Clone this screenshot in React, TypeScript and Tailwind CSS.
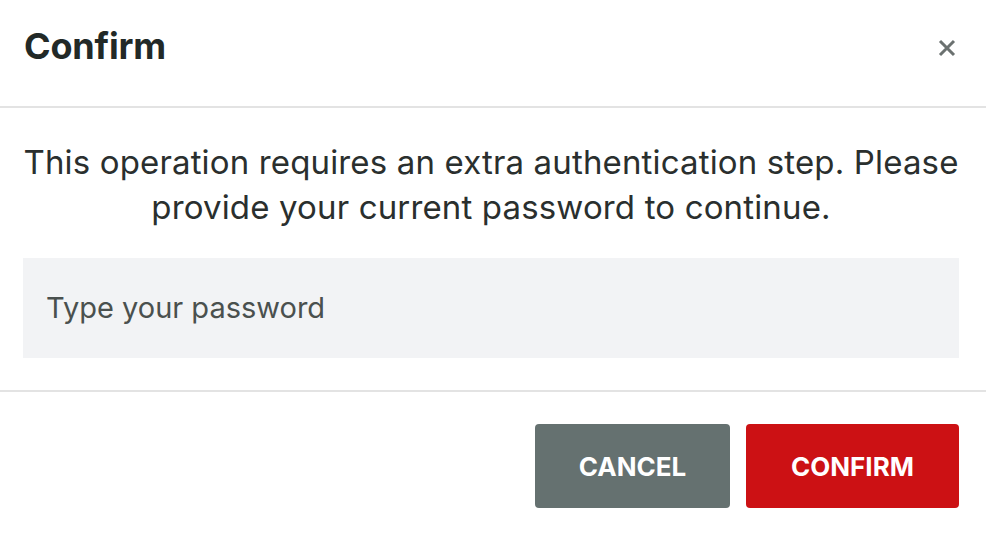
import React from "react";

export default function App() {
  return (
    <div className="w-[986px] h-[536px] bg-white overflow-hidden" style={{ fontFamily: "Inter, 'Noto Sans', sans-serif" }}>
      <div className="h-[108px] flex items-center justify-between pl-6 pr-[30px] pb-[14px] border-b-2 border-[#e3e3e3]">
        <h1 className="text-[36px] font-bold text-[#222927] tracking-[-0.2px]">Confirm</h1>
        <svg width="18" height="18" viewBox="0 0 18 18" className="mt-[3px]">
          <path d="M2 2 L16 16 M16 2 L2 16" stroke="#6b7170" strokeWidth="3" strokeLinecap="butt" />
        </svg>
      </div>
      <div className="pt-8 pb-8 pl-[23px] pr-[27px] border-b-2 border-[#e3e3e3]">
        <p className="text-center text-[33px] leading-[45px] text-[#2a2f2e] tracking-[0.15px]">
          This operation requires an extra authentication step. Please provide your current password to continue.
        </p>
        <div className="mt-[28px] h-[100px] bg-[#f2f3f5] flex items-center pl-[23px]">
          <span className="text-[29px] text-[#4a504e]">Type your password</span>
        </div>
      </div>
      <div className="flex justify-end gap-4 pt-[32px] pr-[27px]">
        <button className="w-[195px] h-[84px] rounded-[4px] bg-[#657170] text-white text-[26px] font-bold">CANCEL</button>
        <button className="w-[213px] h-[84px] rounded-[4px] bg-[#cc1114] text-white text-[26px] font-bold">CONFIRM</button>
      </div>
    </div>
  );
}
